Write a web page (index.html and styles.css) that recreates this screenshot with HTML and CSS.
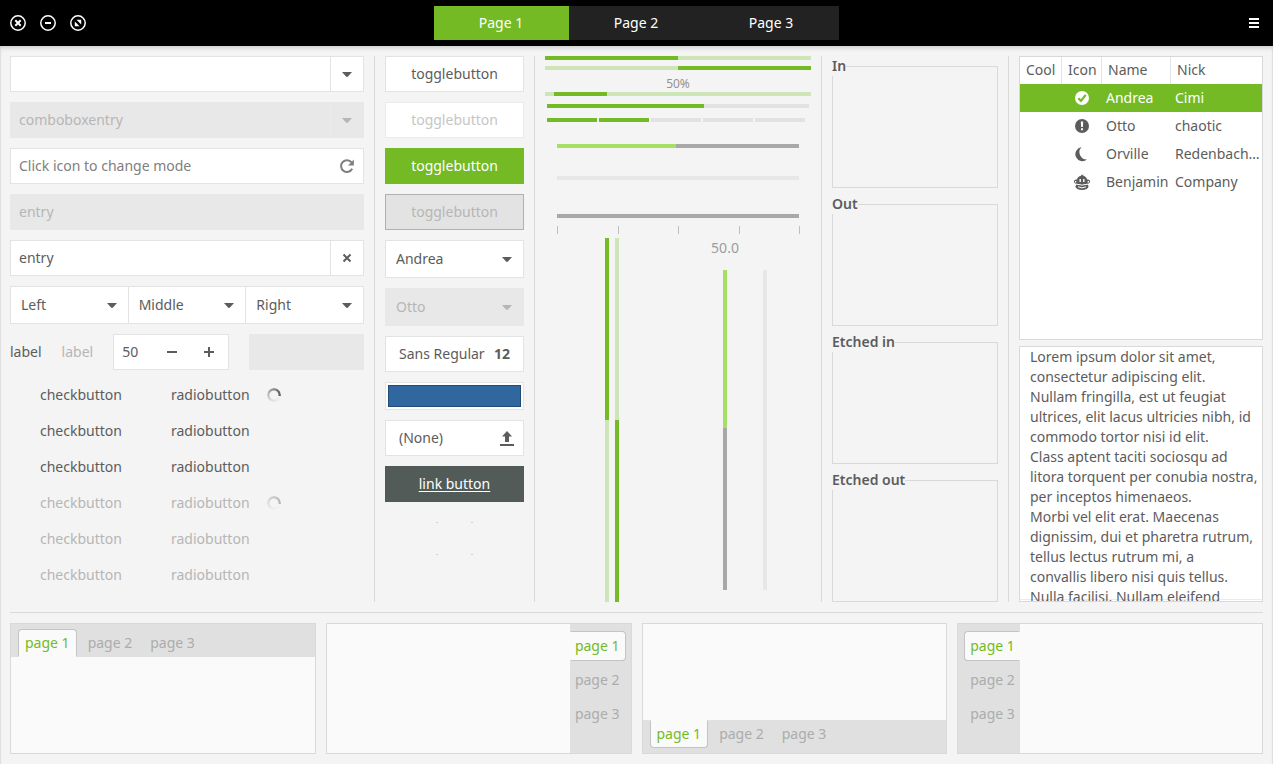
FILE: index.html
```html
<!DOCTYPE html>
<html lang="en">
<head>
<meta charset="utf-8">
<meta name="viewport" content="width=device-width, initial-scale=1">
<title>Widget Factory</title>
<link rel="stylesheet" href="styles.css">
</head>
<body>
<svg class="defs" aria-hidden="true">
  <symbol id="arrow" viewBox="0 0 10 5"><path d="M0 0h10L6 4.500Q5 5.300 4 4.500z"/></symbol>
</svg>
<header class="titlebar">
  <div class="window-buttons">
    <button class="icon-button" aria-label="Close"><svg viewBox="0 0 16 16"><circle cx="8" cy="8" r="7.200"/><path d="M5.300 5.300l5.400 5.400M10.700 5.300l-5.400 5.400"/></svg></button>
    <button class="icon-button" aria-label="Minimize"><svg viewBox="0 0 16 16"><circle cx="8" cy="8" r="7.200"/><path d="M5 8h6"/></svg></button>
    <button class="icon-button" aria-label="Maximize"><svg viewBox="0 0 16 16"><circle cx="8" cy="8" r="7.200"/><path class="solid" d="M6.500 4.800h4.700v4.700zM4.800 6.500v4.700h4.700z"/></svg></button>
  </div>
  <nav class="switcher" aria-label="Pages">
    <button class="switch-tab active">Page 1</button>
    <button class="switch-tab">Page 2</button>
    <button class="switch-tab">Page 3</button>
  </nav>
  <button class="icon-button menu" aria-label="Menu"><svg viewBox="0 0 16 16"><path d="M3 4h10M3 8h10M3 12h10"/></svg></button>
</header>
<main class="window">
  <div class="columns">
    <section class="stack">
      <div class="field">
        <input class="entry" type="text" aria-label="Editable combo box">
        <button class="field-button" aria-label="Open list"><svg class="arrow"><use href="#arrow"/></svg></button>
      </div>
      <div class="field off">
        <input class="entry" type="text" value="comboboxentry" aria-label="Disabled combo box" disabled>
        <button class="field-button" aria-label="Open list" disabled><svg class="arrow"><use href="#arrow"/></svg></button>
      </div>
      <div class="field">
        <input class="entry" type="text" placeholder="Click icon to change mode" aria-label="Mode">
        <button class="field-button plain" aria-label="Change mode"><svg class="icon" viewBox="0 0 16 16"><path class="line muted" d="M12.600 4.400A5.900 5.900 0 1 0 13.200 10.800"/><path class="muted-fill" d="M14.900 1.500v6H9z"/></svg></button>
      </div>
      <div class="field off">
        <input class="entry" type="text" value="entry" aria-label="Disabled entry" disabled>
      </div>
      <div class="field">
        <input class="entry" type="text" value="entry" aria-label="Entry">
        <button class="field-button" aria-label="Clear"><svg class="icon" viewBox="0 0 16 16"><path class="line" d="M4.500 4.500l7 7M11.500 4.500l-7 7"/></svg></button>
      </div>
      <div class="linked">
        <div class="combo"><select aria-label="Left"><option>Left</option></select><svg class="arrow"><use href="#arrow"/></svg></div>
        <div class="combo"><select aria-label="Middle"><option>Middle</option></select><svg class="arrow"><use href="#arrow"/></svg></div>
        <div class="combo"><select aria-label="Right"><option>Right</option></select><svg class="arrow"><use href="#arrow"/></svg></div>
      </div>
      <div class="spin-row">
        <label for="spin">label</label>
        <span class="dim">label</span>
        <div class="field spin">
          <input class="entry" id="spin" type="text" inputmode="numeric" value="50">
          <button class="spin-button" aria-label="Decrease"><svg class="icon" viewBox="0 0 16 16"><path class="line" d="M3 8h10"/></svg></button>
          <button class="spin-button" aria-label="Increase"><svg class="icon" viewBox="0 0 16 16"><path class="line" d="M3 8h10M8 3v10"/></svg></button>
        </div>
        <div class="field off spin"><input class="entry" type="text" aria-label="Disabled spin" disabled></div>
      </div>
      <div class="choices">
        <label class="choice"><input type="checkbox" checked>checkbutton</label>
        <label class="choice"><input type="radio" name="on" checked>radiobutton</label>
        <span class="spinner" role="status" aria-label="Busy"></span>
        <label class="choice"><input type="checkbox">checkbutton</label>
        <label class="choice"><input type="radio" name="on">radiobutton</label>
        <span></span>
        <label class="choice"><input type="checkbox">checkbutton</label>
        <label class="choice"><input type="radio" name="on">radiobutton</label>
        <span></span>
        <label class="choice dim"><input type="checkbox" disabled>checkbutton</label>
        <label class="choice dim"><input type="radio" name="off" disabled>radiobutton</label>
        <span class="spinner faded" role="status" aria-label="Busy"></span>
        <label class="choice dim"><input type="checkbox" disabled>checkbutton</label>
        <label class="choice dim"><input type="radio" name="off" disabled>radiobutton</label>
        <span></span>
        <label class="choice dim"><input type="checkbox" disabled>checkbutton</label>
        <label class="choice dim"><input type="radio" name="off" disabled>radiobutton</label>
      </div>
    </section>
    <div class="rule"></div>
    <section class="stack">
      <button class="button">togglebutton</button>
      <button class="button insensitive" disabled>togglebutton</button>
      <button class="button pressed" aria-pressed="true">togglebutton</button>
      <button class="button pressed-off" aria-pressed="true" disabled>togglebutton</button>
      <div class="combo"><select aria-label="Name"><option>Andrea</option></select><svg class="arrow"><use href="#arrow"/></svg></div>
      <div class="combo off"><select aria-label="Disabled name" disabled><option>Otto</option></select><svg class="arrow"><use href="#arrow"/></svg></div>
      <button class="button split"><span>Sans Regular</span><b>12</b></button>
      <button class="button color" aria-label="Pick a colour"><span class="swatch"></span></button>
      <button class="button split file"><span>(None)</span><svg class="icon" viewBox="0 0 16 16"><path d="M8 1l5 5.500h-3V12H6V6.500H3zM1 14h14v2H1z"/></svg></button>
      <a class="button link" href="#">link button</a>
      <div class="marks" aria-hidden="true"><i></i><i></i><i></i><i></i></div>
    </section>
    <div class="rule"></div>
    <section class="meters">
      <progress class="bar half" max="100" value="50" aria-label="Progress"></progress>
      <progress class="bar half reverse" max="100" value="50" aria-label="Inverted progress"></progress>
      <label class="bar-label" for="pulse">50%</label>
      <progress class="bar pulse" id="pulse" max="100" value="20"></progress>
      <progress class="bar level" max="100" value="60" aria-label="Level"></progress>
      <div class="segments" role="img" aria-label="Level 2 of 5"><i class="lit"></i><i class="lit"></i><i></i><i></i><i></i></div>
      <div class="scales">
        <input class="scale filled" type="range" value="50" aria-label="Scale">
        <input class="scale faint" type="range" value="50" aria-label="Disabled scale" disabled>
        <input class="scale" type="range" value="50" aria-label="Scale with marks">
        <div class="ticks"><i></i><i></i><i></i><i></i><i></i></div>
      </div>
      <div class="uprights">
        <div class="pair">
          <progress class="tall half" max="100" value="50" aria-label="Vertical progress"></progress>
          <progress class="tall half reverse" max="100" value="50" aria-label="Inverted vertical progress"></progress>
        </div>
        <div class="pair wide">
          <div class="valued">
            <label for="volume">50.0</label>
            <input class="tall filled" id="volume" type="range" value="50">
          </div>
          <input class="tall faint" type="range" value="50" aria-label="Disabled vertical scale" disabled>
        </div>
      </div>
    </section>
    <div class="rule"></div>
    <section class="frames">
      <fieldset><legend>In</legend></fieldset>
      <fieldset><legend>Out</legend></fieldset>
      <fieldset><legend>Etched in</legend></fieldset>
      <fieldset><legend>Etched out</legend></fieldset>
    </section>
    <div class="rule"></div>
    <section class="lists">
      <div class="tree">
        <table>
          <colgroup><col class="w-cool"><col class="w-icon"><col class="w-name"><col></colgroup>
          <thead><tr><th>Cool</th><th>Icon</th><th>Name</th><th>Nick</th></tr></thead>
          <tbody>
            <tr class="selected"><td></td><td><svg class="icon" viewBox="0 0 16 16"><circle cx="8" cy="8" r="7"/><path class="cut" d="M4.300 8.200l2.700 2.700 4.700-6"/></svg></td><td>Andrea</td><td>Cimi</td></tr>
            <tr><td></td><td><svg class="icon" viewBox="0 0 16 16"><circle cx="8" cy="8" r="7"/><path class="mark" d="M6.800 3.500h2.400l-.3 5.500H7.100zM7 10.200h2v2H7z"/></svg></td><td>Otto</td><td>chaotic</td></tr>
            <tr><td></td><td><svg class="icon" viewBox="0 0 16 16"><path d="M7.500 1.200A7 7 0 1 0 13 13.400A7.200 7.200 0 0 1 7.500 1.200z"/></svg></td><td>Orville</td><td>Redenbacher</td></tr>
            <tr><td></td><td><svg class="icon" viewBox="0 0 16 16"><path d="M8 1.200l-1-1 .2 1.500C4.600 2 3.200 4 3 5.500 1 5 0 6.300 0 7.500S1 10 2.600 9.800C4 10.500 6 11 8 11s4-.5 5.400-1.200C15 10 16 8.700 16 7.500S15 5 13 5.500C12.800 4 11.500 2 9 1.700L10 .5z"/><ellipse cx="8" cy="12.500" rx="6.500" ry="3.400"/><path class="mark" d="M5.500 5h1.400v3H5.500zM9.100 5h1.400v3H9.100zM1 7h1.300v1.400H1zM13.700 7H15v1.400h-1.300z"/><path class="smile" d="M2.500 10.200Q8 12 13.500 10.200M4 12.800Q8 15 12 12.800"/></svg></td><td>Benjamin</td><td>Company</td></tr>
          </tbody>
        </table>
      </div>
      <textarea class="text-view" aria-label="Text" spellcheck="false">Lorem ipsum dolor sit amet, consectetur adipiscing elit.
Nullam fringilla, est ut feugiat ultrices, elit lacus ultricies nibh, id commodo tortor nisi id elit.
Class aptent taciti sociosqu ad litora torquent per conubia nostra, per inceptos himenaeos.
Morbi vel elit erat. Maecenas dignissim, dui et pharetra rutrum, tellus lectus rutrum mi, a
convallis libero nisi quis tellus.
Nulla facilisi. Nullam eleifend</textarea>
    </section>
  </div>
  <div class="rule across"></div>
  <div class="notebooks">
    <section class="notebook top"><div class="tabs"><button class="tab current">page 1</button><button class="tab">page 2</button><button class="tab">page 3</button></div></section>
    <section class="notebook right"><div class="tabs"><button class="tab current">page 1</button><button class="tab">page 2</button><button class="tab">page 3</button></div></section>
    <section class="notebook bottom"><div class="tabs"><button class="tab current">page 1</button><button class="tab">page 2</button><button class="tab">page 3</button></div></section>
    <section class="notebook left"><div class="tabs"><button class="tab current">page 1</button><button class="tab">page 2</button><button class="tab">page 3</button></div></section>
  </div>
</main>
</body>
</html>
```
FILE: styles.css
```css
:root {
  --bg: #f4f4f4;
  --base: #fff;
  --text: #5c5c5c;
  --dim: #b6b6b6;
  --green: #73ba25;
  --pale: #cee5b7;
  --border: #e3e3e3;
  --line: #d9d9d9;
  --off: #e8e8e8;
}

* { box-sizing: border-box; }

body {
  margin: 0;
  min-height: 100vh;
  display: flex;
  flex-direction: column;
  background: var(--bg);
  color: var(--text);
  font: 14px/20px "Noto Sans", "Open Sans", sans-serif;
}

button, input, select, textarea {
  margin: 0;
  padding: 0;
  border: 0;
  border-radius: 0;
  background: none;
  color: inherit;
  font: inherit;
  appearance: none;
  opacity: 1;
}

.defs { display: none; }
svg { display: block; fill: currentColor; }
.icon { width: 16px; height: 16px; }
.arrow { width: 10px; height: 5px; }
.line { fill: none; stroke: currentColor; stroke-width: 2; }
.muted { stroke: #808080; }
.muted-fill { fill: #808080; }
.dim { color: var(--dim); }

/* Title bar */
.titlebar {
  display: grid;
  grid-template-columns: 1fr auto 1fr;
  align-items: center;
  height: 46px;
  padding: 0 11px 0 10px;
  background: #000;
  color: #fff;
}
.window-buttons { display: flex; gap: 14px; }
.icon-button svg {
  width: 16px;
  height: 16px;
  fill: none;
  stroke: #fff;
  stroke-width: 2;
}
.icon-button circle { stroke-width: 1.500; }
.icon-button .solid { fill: #fff; stroke: none; }
.menu { justify-self: end; }
.switcher { display: flex; }
.switch-tab { width: 135px; height: 34px; background: #222; }
.switch-tab.active { background: var(--green); }

/* Content area */
.window {
  flex: 1;
  display: flex;
  flex-direction: column;
  gap: 10px;
  padding: 10px;
  box-shadow: inset 0 4px 4px -2px #ccc, inset 2px 0 1px -1px #e2e2e2, inset -2px 0 1px -1px #e2e2e2;
}
.columns {
  flex: 1;
  display: grid;
  grid-template-columns: minmax(0, 354fr) 1px minmax(0, 139fr) 1px minmax(0, 266fr) 1px minmax(0, 166fr) 1px minmax(0, 244fr);
  gap: 10px;
}
.rule { background: var(--line); }
.across { height: 1px; }
.stack { display: flex; flex-direction: column; gap: 10px; }

/* Entries */
.field {
  display: flex;
  height: 36px;
  border: 1px solid var(--border);
  background: var(--base);
}
.field.off { background: var(--off); border-color: var(--off); color: var(--dim); }
.entry { flex: 1; min-width: 0; padding: 0 8px; }
.entry::placeholder { color: #808080; opacity: 1; }
.field-button {
  display: grid;
  place-items: center;
  width: 33px;
  border-left: 1px solid var(--border);
}
.off .field-button { border-color: #ebebeb; }
.field-button.plain { border-color: transparent; }

/* Drop-downs */
.combo {
  flex: 1;
  display: grid;
  align-items: center;
  border: 1px solid var(--border);
  background: var(--base);
}
.combo select, .combo svg { grid-area: 1 / 1; }
.combo select { width: 100%; height: 36px; padding: 0 10px; }
.combo svg { justify-self: end; margin-right: 11px; pointer-events: none; }
.combo.off { background: var(--off); border-color: var(--off); color: var(--dim); }
.stack > .combo { flex: none; }
.linked { display: flex; }
.linked .combo + .combo { border-left: 0; }

.spin-row { display: flex; align-items: center; gap: 20px; }
.spin { flex: 1; min-width: 0; }
.spin-button { display: grid; place-items: center; width: 37px; }

.choices {
  display: grid;
  grid-template-columns: 121px 116px auto;
  grid-auto-rows: 26px;
  gap: 10px;
  align-items: center;
  padding-top: 2px;
}
.choice { display: flex; align-items: center; gap: 10px; }
.choice input { width: 20px; height: 20px; }
.spinner {
  width: 14px;
  height: 14px;
  border-radius: 50%;
  background: conic-gradient(from 100deg, #f4f4f4, #ddd 30%, #bbb 50%, #666 90%, #5c5c5c);
  mask: radial-gradient(circle, transparent 4px, #000 5px);
}
.faded { opacity: .4; }

/* Buttons */
.button {
  height: 36px;
  border: 1px solid var(--border);
  background: var(--base);
}
.insensitive { color: #c6c6c6; border-color: #ebebeb; }
.pressed { background: var(--green); border-color: var(--green); color: #fff; }
.pressed-off { background: #e3e3e3; border-color: #b0b0b0; color: var(--dim); }
.split {
  display: flex;
  align-items: center;
  justify-content: space-between;
  padding: 0 13px;
}
.file { padding-right: 8px; }
.color { height: 28px; padding: 2px; display: flex; }
.swatch { flex: 1; align-self: stretch; background: #31679f; border: 1px solid #204a78; }
.link {
  padding: 7px;
  border-color: #505a57;
  background: #525b58;
  color: #fff;
  text-align: center;
  text-underline-offset: 2px;
}
.marks {
  align-self: center;
  display: grid;
  grid-template-columns: 2px 2px;
  gap: 31px 33px;
  padding-top: 10px;
}
.marks i { height: 1px; background: #d0d0d0; }

/* Progress bars, levels and scales */
.meters { display: flex; flex-direction: column; }
.half { --fill: linear-gradient(to right, var(--green) 50%, var(--pale) 50%); }
.half.reverse { --fill: linear-gradient(to left, var(--green) 50%, var(--pale) 50%); }
.tall.half { --fill: linear-gradient(to bottom, var(--green) 50%, var(--pale) 50%); }
.tall.half.reverse { --fill: linear-gradient(to top, var(--green) 50%, var(--pale) 50%); }
.pulse { --fill: linear-gradient(to right, var(--pale) 9px, var(--green) 9px, var(--green) 62px, var(--pale) 62px); }
.level { --fill: linear-gradient(to right, var(--green) 60%, #e2e2e2 60%); }
progress { appearance: none; border: 0; background: var(--fill); }
progress::-webkit-progress-bar { background: var(--fill); }
progress::-webkit-progress-value { background: transparent; }
.bar { display: block; width: 100%; height: 4px; }
.bar.reverse { margin-top: 6px; }
.bar-label {
  margin-top: 6px;
  font-size: 12px;
  line-height: 16px;
  text-align: center;
  color: #929292;
}
.level { width: auto; margin: 8px 2px 0; }
.segments { display: flex; gap: 2px; margin: 10px 6px 0 2px; }
.segments i { flex: 1; height: 4px; background: #e2e2e2; }
.segments .lit { background: var(--green); }
.scales { display: flex; flex-direction: column; margin: 22px 12px 0; }
input[type="range"] { background: #a8a8a8; }
input[type="range"]::-webkit-slider-thumb { appearance: none; width: 0; height: 0; }
.scale { width: 100%; height: 4px; }
.scale + .scale { margin-top: 28px; }
.scale.faint + .scale { margin-top: 34px; }
input.scale.filled { background: linear-gradient(to right, #a5df64 49%, #a8a8a8 49%); }
input[type="range"].faint { background: #e7e7e7; }
.ticks { display: flex; justify-content: space-between; margin: 8px -1px 0 0; }
.ticks i { width: 1px; height: 8px; background: #c0c0c0; }
.uprights { flex: 1; display: flex; margin-top: 4px; }
.pair { display: flex; justify-content: center; gap: 6px; width: 50%; }
.tall { display: block; width: 4px; height: auto; }
.wide { justify-content: flex-start; gap: 18px; padding: 0 0 12px 27px; }
.wide > .tall { margin-top: 32px; }
.valued { display: flex; flex-direction: column; align-items: center; gap: 12px; width: 40px; color: #9c9c9c; }
.valued .tall { flex: 1; }
input.tall.filled { background: linear-gradient(to bottom, #a5df64 158px, #a8a8a8 158px); }

/* Frames */
.frames { display: flex; flex-direction: column; gap: 6px; }
fieldset { flex: 1; min-width: 0; margin: 0; padding: 0; border: 1px solid var(--line); }
legend { margin-left: -1px; padding: 0; font-weight: 600; }

/* Tree and text view */
.lists { display: flex; flex-direction: column; gap: 6px; }
.tree { flex: 284 0 0; border: 1px solid var(--line); background: var(--base); }
table { width: 100%; border-collapse: separate; border-spacing: 0; table-layout: fixed; }
.w-cool { width: 42px; }
.w-icon { width: 40px; }
.w-name { width: 69px; }
th { height: 27px; padding: 0 0 1px 6px; border-right: 1px solid var(--border); font-weight: 400; text-align: left; }
th:last-child { border-right: 0; }
td { height: 28px; padding: 0 1px 0 4px; overflow: hidden; white-space: nowrap; text-overflow: ellipsis; }
td .icon { margin-left: 8px; }
.selected { background: var(--green); color: #fff; }
.cut { fill: none; stroke: var(--green); stroke-width: 2.200; }
.mark { fill: #fff; }
.smile { fill: none; stroke: #fff; stroke-width: 1; }
.text-view {
  flex: 256 0 0;
  min-height: 0;
  width: 100%;
  padding: 0 0 0 10px;
  border: 1px solid var(--line);
  background: linear-gradient(to top, #fff 1px, #e9eee4 1px, #e9eee4 2px, #fff 2px);
  resize: none;
  overflow: hidden;
}

/* Notebooks */
.notebooks { display: grid; grid-template-columns: repeat(4, minmax(0, 1fr)); gap: 10px; }
.notebook {
  display: flex;
  min-height: 131px;
  border: 1px solid var(--line);
  background: #fafafa;
}
.tabs { display: flex; gap: 4px; background: #e0e0e0; color: #acacac; }
.tab { height: 28px; padding: 0 6px; border: 1px solid transparent; }
.current { background: #fafafa; border-color: #c4c4c4; color: var(--green); }
.top { flex-direction: column; }
.bottom { flex-direction: column-reverse; }
.top .tabs { padding: 5px 7px 0; }
.bottom .tabs { padding: 0 7px 5px; }
.right { flex-direction: row-reverse; }
.right .tabs, .left .tabs { flex-direction: column; }
.right .tabs { padding: 7px 5px 0 0; }
.left .tabs { padding: 7px 0 0 6px; }
.right .tab, .left .tab { height: 30px; }
.right .tab { padding: 0 5px 0 4px; }
.left .tab { padding: 0 4px 0 5px; }
.top .current { border-bottom-color: transparent; border-radius: 4px 4px 0 0; }
.bottom .current { border-top-color: transparent; border-radius: 0 0 4px 4px; }
.right .current { border-left-color: transparent; border-radius: 0 4px 4px 0; }
.left .current { border-right-color: transparent; border-radius: 4px 0 0 4px; }
```
